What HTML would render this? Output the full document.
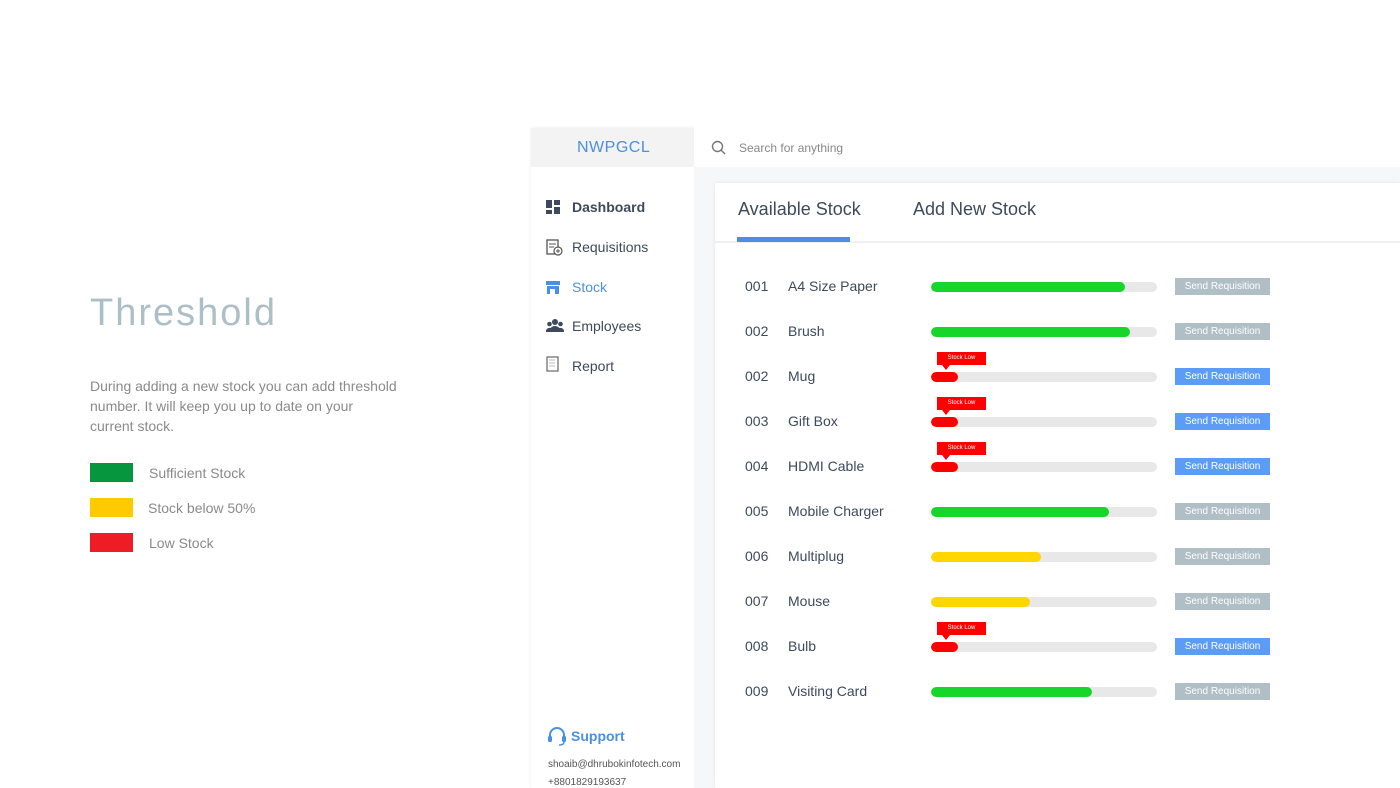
<!DOCTYPE html>
<html><head><meta charset="utf-8"><style>
*{margin:0;padding:0;box-sizing:border-box}
body{width:1400px;height:788px;background:#fff;font-family:"Liberation Sans","DejaVu Sans",sans-serif;position:relative;overflow:hidden}
.a{position:absolute;white-space:nowrap}
.h1{left:90px;top:292px;font-size:38px;color:#adbfc6;letter-spacing:2px}
.p{left:90px;font-size:14px;color:#8a8a8a}
.sw{left:90px;width:43px;height:19px}
.lg{font-size:14px;color:#8a8a8a}
.nav{left:572px;font-size:14px;color:#3d4a5c}
.ic{left:546px}
.num{left:745px;font-size:14px;color:#3d4a5c}
.nm{left:788px;font-size:14px;color:#3d4a5c}
.bar{left:931px;width:226px;height:10px;border-radius:5px;background:#e8e8e8;overflow:hidden}
.bar i{display:block;height:10px;border-radius:5px}
.btn{left:1175px;width:95px;height:17px;font-size:10px;color:#fff;text-align:center;line-height:17px}
.g{background:#b0bec5}.b{background:#5b9cf6}
.tag{left:937px;width:49px;height:13px;background:#f00;color:#fff;font-size:6px;text-align:center;line-height:13px}
.tag:after{content:"";position:absolute;left:5px;top:13px;border:4px solid transparent;border-top:5px solid #f00}
</style></head><body>
<div class="a h1">Threshold</div>
<div class="a p" style="top:378px">During adding a new stock you can add threshold</div>
<div class="a p" style="top:398px">number. It will keep you up to date on your</div>
<div class="a p" style="top:418px">current stock.</div>
<div class="a sw" style="top:463px;background:#06963d"></div><div class="a lg" style="left:149px;top:465px">Sufficient Stock</div>
<div class="a sw" style="top:498px;background:#ffcb00"></div><div class="a lg" style="left:148px;top:500px">Stock below 50%</div>
<div class="a sw" style="top:533px;background:#ee1c24"></div><div class="a lg" style="left:149px;top:535px">Low Stock</div>

<div class="a" style="left:531px;top:128px;width:163px;height:660px;background:#fff;box-shadow:0 0 3px rgba(0,0,0,.08)"></div>
<div class="a" style="left:531px;top:128px;width:163px;height:39px;background:#f3f3f3"></div>
<div class="a" style="left:577px;top:139px;font-size:16px;color:#4a90e2;letter-spacing:.5px">NWPGCL</div>
<div class="a" style="left:694px;top:128px;width:706px;height:39px;background:#fff"></div>
<svg class="a" style="left:711px;top:140px" width="16" height="16"><circle cx="6.5" cy="6.5" r="5" fill="none" stroke="#777" stroke-width="1.4"/><path d="M10 10l4 4" stroke="#777" stroke-width="1.4"/></svg>
<div class="a" style="left:739px;top:141px;font-size:12px;color:#888">Search for anything</div>
<div class="a" style="left:694px;top:167px;width:706px;height:621px;background:#f6f7f9"></div>
<div class="a" style="left:715px;top:183px;width:685px;height:605px;background:#fff;box-shadow:0 0 4px rgba(0,0,0,.08)"></div>
<div class="a" style="left:715px;top:241px;width:685px;height:2px;background:#eef0f2"></div>
<div class="a" style="left:738px;top:199px;font-size:18px;color:#3d4a5c">Available Stock</div>
<div class="a" style="left:913px;top:199px;font-size:18px;color:#3d4a5c">Add New Stock</div>
<div class="a" style="left:737px;top:237px;width:113px;height:5px;background:#4a90e2"></div>

<svg class="a ic" style="top:200px" width="14" height="14"><rect x="0" y="0" width="6" height="8" fill="#3d4a5c"/><rect x="8" y="0" width="6" height="5" fill="#3d4a5c"/><rect x="0" y="10" width="6" height="4" fill="#3d4a5c"/><rect x="8" y="7" width="6" height="7" fill="#3d4a5c"/></svg>
<div class="a nav" style="top:199px;font-weight:bold">Dashboard</div>
<svg class="a ic" style="top:239px" width="17" height="17"><rect x="1" y="1" width="11" height="14" fill="none" stroke="#555" stroke-width="1.3"/><path d="M3 5h7M3 8h5" stroke="#555"/><circle cx="12" cy="12" r="4" fill="#fff" stroke="#555" stroke-width="1.2"/><path d="M12 10v4M10 12h4" stroke="#555"/></svg>
<div class="a nav" style="top:239px">Requisitions</div>
<svg class="a ic" style="top:281px" width="14" height="13"><rect x="0" y="0" width="14" height="4" fill="#4a90e2"/><rect x="1" y="5" width="12" height="8" fill="#4a90e2"/><rect x="4" y="8" width="5" height="5" fill="#fff"/></svg>
<div class="a nav" style="top:279px;color:#4a90e2">Stock</div>
<svg class="a ic" style="top:319px" width="18" height="13"><circle cx="9" cy="3" r="3" fill="#3d4a5c"/><circle cx="3.5" cy="5" r="2.3" fill="#3d4a5c"/><circle cx="14.5" cy="5" r="2.3" fill="#3d4a5c"/><path d="M3 13a6 6 0 0 1 12 0z" fill="#3d4a5c"/><path d="M0 13a3.5 3.5 0 0 1 6-3v3zM18 13a3.5 3.5 0 0 0-6-3v3z" fill="#3d4a5c"/></svg>
<div class="a nav" style="top:318px">Employees</div>
<svg class="a ic" style="top:356px" width="14" height="17"><rect x="1" y="1" width="11" height="14" fill="#fff" stroke="#666" stroke-width="1.2"/><path d="M3 4h6M3 7h6M3 10h6" stroke="#bbb"/></svg>
<div class="a nav" style="top:358px">Report</div>
<svg class="a" style="left:547px;top:726px" width="20" height="20"><path d="M3 11V9a7 7 0 0 1 14 0v2" fill="none" stroke="#4a90e2" stroke-width="2"/><rect x="1" y="10" width="4" height="6" rx="1.5" fill="#4a90e2"/><rect x="15" y="10" width="4" height="6" rx="1.5" fill="#4a90e2"/><path d="M17 16q0 3-5 3" fill="none" stroke="#4a90e2" stroke-width="1.5"/></svg>
<div class="a" style="left:571px;top:728px;font-size:14px;font-weight:bold;color:#4a90e2">Support</div>
<div class="a" style="left:548px;top:759px;font-size:10px;color:#555">shoaib@dhrubokinfotech.com</div>
<div class="a" style="left:548px;top:777px;font-size:10px;color:#555">+8801829193637</div>

<div id="rows"></div>
<script>
var d=[["001","A4 Size Paper",194,"#17d62a",0],["002","Brush",199,"#17d62a",0],["002","Mug",27,"#f00",1],["003","Gift Box",27,"#f00",1],["004","HDMI Cable",27,"#f00",1],["005","Mobile Charger",178,"#17d62a",0],["006","Multiplug",110,"#ffd600",0],["007","Mouse",99,"#ffd600",0],["008","Bulb",27,"#f00",1],["009","Visiting Card",161,"#17d62a",0]];
var h="";d.forEach(function(r,i){var c=286+45*i;
h+='<div class="a num" style="top:'+(c-8)+'px">'+r[0]+'</div><div class="a nm" style="top:'+(c-8)+'px">'+r[1]+'</div>';
h+='<div class="a bar" style="top:'+(c-4)+'px"><i style="width:'+r[2]+'px;background:'+r[3]+'"></i></div>';
if(r[4])h+='<div class="a tag" style="top:'+(c-24)+'px">Stock Low</div>';
h+='<div class="a btn '+(r[4]?'b':'g')+'" style="top:'+(c-8)+'px">Send Requisition</div>';});
document.getElementById("rows").innerHTML=h;
</script>
</body></html>
